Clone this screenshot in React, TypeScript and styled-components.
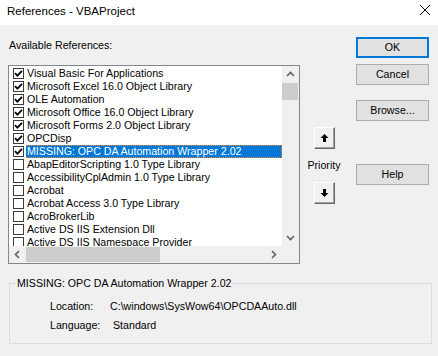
import React from "react";
import styled, { createGlobalStyle } from "styled-components";

const GlobalStyle = createGlobalStyle`
  html, body {
    margin: 0;
    padding: 0;
    background: #f0f0f0;
  }
  body {
    font-family: "Liberation Sans", Arial, sans-serif;
    font-size: 10.65px;
    color: #000;
  }
`;

// Window chrome
const Window = styled.div`
  width: 438px;
  height: 356px;
  background: #f0f0f0;
  display: flex;
  flex-direction: column;
  overflow: hidden;
`;

const TitleBar = styled.div`
  height: 25px;
  background: #fff;
  display: flex;
  align-items: flex-start;
  padding-left: 7px;
  box-sizing: border-box;
`;

const TitleText = styled.div`
  font-size: 11.5px;
  line-height: 14px;
  margin-top: 4px;
`;

const CloseBox = styled.div`
  margin-left: auto;
  margin-right: 8px;
  margin-top: 5px;
  width: 10px;
  height: 10px;
  display: flex;
`;

const Content = styled.div`
  display: flex;
  flex-direction: column;
  padding: 0 7px 0 8px;
`;

const TopRow = styled.div`
  display: flex;
`;

const LeftColumn = styled.div`
  display: flex;
  flex-direction: column;
  padding-top: 14px;
`;

const Label = styled.div`
  line-height: 13px;
  padding-left: 1px;
`;

// List box with scrollbars
const ListBox = styled.div`
  margin-top: 13px;
  width: 292px;
  height: 199px;
  box-sizing: border-box;
  border: 1px solid #828790;
  background: #fff;
  display: grid;
  grid-template-columns: 1fr 17px;
  grid-template-rows: 1fr 17px;
`;

const Rows = styled.div`
  overflow: hidden;
  padding-top: 1px;
`;

const Row = styled.div`
  height: 13px;
  display: flex;
  align-items: center;
  padding-left: 4px;
  white-space: nowrap;
`;

const Check = styled.span`
  width: 11px;
  height: 11px;
  box-sizing: border-box;
  border: 1px solid #3c3c3c;
  background: #fff;
  display: flex;
  align-items: center;
  justify-content: center;
  flex-shrink: 0;
`;

const ItemText = styled.span<{ $selected?: boolean }>`
  margin-left: 2px;
  flex: 1;
  height: 13px;
  line-height: 11px;
  box-sizing: border-box;
  padding-left: 1px;
  color: ${(p) => (p.$selected ? "#fff" : "#000")};
  background: ${(p) => (p.$selected ? "#0078d7" : "transparent")};
  border: 1px ${(p) => (p.$selected ? "dotted #ff8728" : "solid transparent")};
  border-left-width: 0;
`;

const VScroll = styled.div`
  background: #f0f0f0;
  display: flex;
  flex-direction: column;
`;

const HScroll = styled.div`
  background: #f0f0f0;
  display: flex;
`;

const Corner = styled.div`
  background: #f0f0f0;
`;

const ArrowCell = styled.div`
  width: 17px;
  height: 17px;
  display: flex;
  align-items: center;
  justify-content: center;
  flex-shrink: 0;
`;

const VThumb = styled.div`
  height: 17px;
  margin: 0 1px 0 0;
  background: #cdcdcd;
`;

const HThumb = styled.div`
  width: 134px;
  margin: 1px 0;
  background: #cdcdcd;
`;

const Spacer = styled.div`
  flex: 1;
`;

// Priority column
const MiddleColumn = styled.div`
  width: 34px;
  margin-left: 7px;
  padding-top: 102px;
  display: flex;
  flex-direction: column;
  align-items: center;
`;

const ArrowButton = styled.div<{ $gap?: number }>`
  width: 21px;
  height: 22px;
  box-sizing: border-box;
  margin-top: ${(p) => p.$gap ?? 0}px;
  background: #f0f0f0;
  border: 1px solid;
  border-color: #fff #696969 #696969 #fff;
  box-shadow: inset -1px -1px 0 #a0a0a0;
  display: flex;
  align-items: center;
  justify-content: center;
`;

const PriorityLabel = styled.div`
  margin-top: 10px;
  line-height: 13px;
`;

// Command buttons
const RightColumn = styled.div`
  margin-left: 15px;
  padding-top: 12px;
  display: flex;
  flex-direction: column;
`;

const Button = styled.div<{ $gap?: number; $default?: boolean }>`
  width: 73px;
  height: 21px;
  box-sizing: border-box;
  margin-top: ${(p) => p.$gap ?? 0}px;
  background: #e1e1e1;
  border: ${(p) => (p.$default ? "2px solid #0078d7" : "1px solid #adadad")};
  display: flex;
  align-items: center;
  justify-content: center;
  line-height: 13px;
`;

// Details group
const Group = styled.fieldset`
  margin: 13px 0 0 1px;
  width: 423px;
  box-sizing: border-box;
  border: 1px solid #dcdcdc;
  padding: 0;
`;

const Legend = styled.legend`
  margin-left: 6px;
  padding: 0 1px;
  line-height: 13px;
`;

const Details = styled.div`
  padding: 10px 0 11px 40px;
  display: flex;
  flex-direction: column;
  gap: 6px;
`;

const DetailRow = styled.div`
  display: flex;
  line-height: 13px;
`;

const DetailLabel = styled.span<{ $width: number }>`
  width: ${(p) => p.$width}px;
`;

const CheckMark = () => (
  <svg width="9" height="9" viewBox="0 0 9 9">
    <polyline
      points="1,4.2 3.4,6.6 8,1.8"
      fill="none"
      stroke="#000"
      strokeWidth="1.8"
    />
  </svg>
);

const Chevron = ({ dir }: { dir: "up" | "down" | "left" | "right" }) => {
  const rot = { up: 0, right: 90, down: 180, left: 270 }[dir];
  return (
    <svg width="9" height="9" viewBox="0 0 9 9">
      <polyline
        points="1,6 4.5,2.5 8,6"
        fill="none"
        stroke="#606060"
        strokeWidth="1.6"
        transform={`rotate(${rot} 4.5 4.5)`}
      />
    </svg>
  );
};

const BlockArrow = ({ down }: { down?: boolean }) => (
  <svg width="9" height="10" viewBox="0 0 9 10">
    <polygon
      points="4.5,1 8.5,5 6,5 6,9 3,9 3,5 0.5,5"
      fill="#000"
      transform={down ? "rotate(180 4.5 5)" : undefined}
    />
  </svg>
);

type Reference = { name: string; checked: boolean; selected?: boolean };

const references: Reference[] = [
  { name: "Visual Basic For Applications", checked: true },
  { name: "Microsoft Excel 16.0 Object Library", checked: true },
  { name: "OLE Automation", checked: true },
  { name: "Microsoft Office 16.0 Object Library", checked: true },
  { name: "Microsoft Forms 2.0 Object Library", checked: true },
  { name: "OPCDisp", checked: true },
  { name: "MISSING: OPC DA Automation Wrapper 2.02", checked: true, selected: true },
  { name: "AbapEditorScripting 1.0 Type Library", checked: false },
  { name: "AccessibilityCplAdmin 1.0 Type Library", checked: false },
  { name: "Acrobat", checked: false },
  { name: "Acrobat Access 3.0 Type Library", checked: false },
  { name: "AcroBrokerLib", checked: false },
  { name: "Active DS IIS Extension Dll", checked: false },
  { name: "Active DS IIS Namespace Provider", checked: false },
];

const App: React.FC = () => {
  return (
    <>
      <GlobalStyle />
      <Window>
        <TitleBar>
          <TitleText>References - VBAProject</TitleText>
          <CloseBox>
            <svg width="10" height="10" viewBox="0 0 10 10">
              <path d="M0 0 L10 10 M10 0 L0 10" stroke="#000" strokeWidth="1" />
            </svg>
          </CloseBox>
        </TitleBar>

        <Content>
          <TopRow>
            <LeftColumn>
              <Label>Available References:</Label>
              <ListBox>
                <Rows>
                  {references.map((ref) => (
                    <Row key={ref.name}>
                      <Check>{ref.checked && <CheckMark />}</Check>
                      <ItemText $selected={ref.selected}>{ref.name}</ItemText>
                    </Row>
                  ))}
                </Rows>
                <VScroll>
                  <ArrowCell>
                    <Chevron dir="up" />
                  </ArrowCell>
                  <VThumb />
                  <Spacer />
                  <ArrowCell>
                    <Chevron dir="down" />
                  </ArrowCell>
                </VScroll>
                <HScroll>
                  <ArrowCell>
                    <Chevron dir="left" />
                  </ArrowCell>
                  <HThumb />
                  <Spacer />
                  <ArrowCell>
                    <Chevron dir="right" />
                  </ArrowCell>
                </HScroll>
                <Corner />
              </ListBox>
            </LeftColumn>

            <MiddleColumn>
              <ArrowButton>
                <BlockArrow />
              </ArrowButton>
              <PriorityLabel>Priority</PriorityLabel>
              <ArrowButton $gap={10}>
                <BlockArrow down />
              </ArrowButton>
            </MiddleColumn>

            <RightColumn>
              <Button $default>OK</Button>
              <Button $gap={6}>Cancel</Button>
              <Button $gap={15}>Browse...</Button>
              <Button $gap={43}>Help</Button>
            </RightColumn>
          </TopRow>

          <Group>
            <Legend>MISSING: OPC DA Automation Wrapper 2.02</Legend>
            <Details>
              <DetailRow>
                <DetailLabel $width={60}>Location:</DetailLabel>
                <span>C:\windows\SysWow64\OPCDAAuto.dll</span>
              </DetailRow>
              <DetailRow>
                <DetailLabel $width={63}>Language:</DetailLabel>
                <span>Standard</span>
              </DetailRow>
            </Details>
          </Group>
        </Content>
      </Window>
    </>
  );
};

export default App;
